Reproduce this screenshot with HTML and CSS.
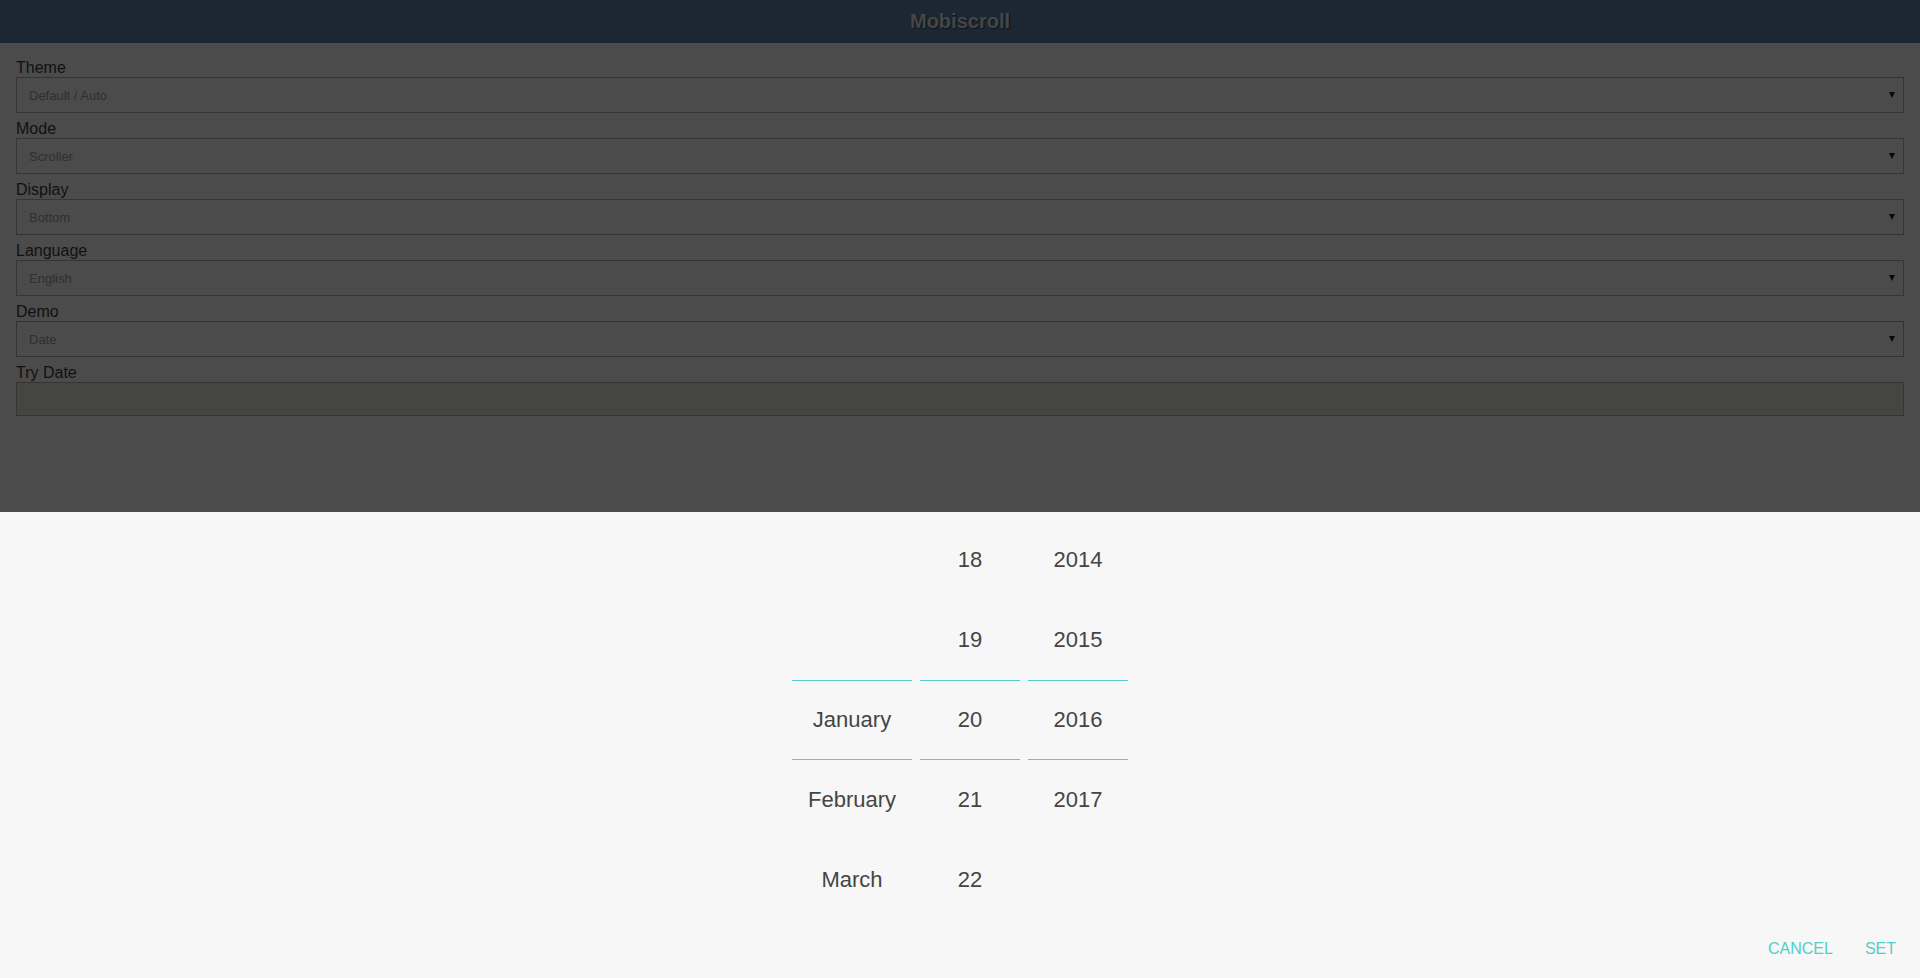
FILE: index.html
```html
<!DOCTYPE html>
<html>
<head>
<meta charset="utf-8">
<title>Mobiscroll</title>
<link rel="stylesheet" href="styles.css">
</head>
<body>
<div class="page">
  <header class="topbar"><h1 class="title">Mobiscroll</h1></header>
  <main class="form">
    <label class="lbl">Theme</label>
    <div class="sel"><span class="val">Default / Auto</span><span class="arrow"></span></div>
    <label class="lbl">Mode</label>
    <div class="sel"><span class="val">Scroller</span><span class="arrow"></span></div>
    <label class="lbl">Display</label>
    <div class="sel"><span class="val">Bottom</span><span class="arrow"></span></div>
    <label class="lbl">Language</label>
    <div class="sel"><span class="val">English</span><span class="arrow"></span></div>
    <label class="lbl">Demo</label>
    <div class="sel"><span class="val">Date</span><span class="arrow"></span></div>
    <label class="lbl">Try Date</label>
    <div class="inp"></div>
  </main>
  <section class="picker">
    <div class="wheels">
      <div class="wheel month">
        <div class="item"></div>
        <div class="item"></div>
        <div class="item sel-item">January</div>
        <div class="item">February</div>
        <div class="item">March</div>
      </div>
      <div class="wheel day">
        <div class="item">18</div>
        <div class="item">19</div>
        <div class="item sel-item">20</div>
        <div class="item">21</div>
        <div class="item">22</div>
      </div>
      <div class="wheel year">
        <div class="item">2014</div>
        <div class="item">2015</div>
        <div class="item sel-item">2016</div>
        <div class="item">2017</div>
        <div class="item"></div>
      </div>
    </div>
    <div class="buttons">
      <span class="btn">CANCEL</span>
      <span class="btn">SET</span>
    </div>
  </section>
</div>
</body>
</html>
```

FILE: styles.css
```css
* { box-sizing: border-box; }
html, body { margin: 0; padding: 0; }
body {
  width: 1920px;
  height: 978px;
  overflow: hidden;
  font-family: "Liberation Sans", Arial, sans-serif;
  background: #4b4b4b;
}
.page {
  display: flex;
  flex-direction: column;
  height: 978px;
}
.topbar {
  height: 43px;
  background: #1b2733;
  display: flex;
  align-items: center;
  justify-content: center;
}
.title {
  margin: 0;
  font-size: 20px;
  font-weight: bold;
  color: #464646;
  text-shadow: 1px 1px 1px #0e141a;
}
.form {
  flex: 1;
  display: flex;
  flex-direction: column;
  padding: 9px 16px 0 16px;
  background: #4b4b4b;
}
.lbl {
  display: block;
  margin-top: 7px;
  height: 18px;
  line-height: 18px;
  font-size: 16px;
  color: #111111;
}
.sel {
  height: 36px;
  border: 1px solid #353535;
  display: flex;
  align-items: center;
  justify-content: space-between;
  padding: 0 8px 0 12px;
}
.val {
  font-size: 13px;
  color: #2f2f2f;
}
.arrow {
  width: 0;
  height: 0;
  border-left: 3px solid transparent;
  border-right: 3px solid transparent;
  border-top: 6px solid #0a0a0a;
}
.inp {
  height: 34px;
  border: 1px solid #353535;
  background: #454543;
}
.picker {
  height: 466px;
  background: #f7f7f7;
  display: flex;
  flex-direction: column;
  padding-top: 8px;
}
.wheels {
  display: flex;
  justify-content: center;
  gap: 8px;
  height: 400px;
}
.wheel { display: flex; flex-direction: column; }
.month { width: 120px; }
.day, .year { width: 100px; }
.item {
  height: 80px;
  display: flex;
  align-items: center;
  justify-content: center;
  font-size: 22px;
  color: #454545;
}
.sel-item {
  border-top: 1px solid #4fcfc8;
  border-bottom: 1px solid #4fcfc8;
}
.buttons {
  flex: 1;
  display: flex;
  justify-content: flex-end;
  align-items: center;
  gap: 32px;
  padding-right: 24px;
}
.btn {
  font-size: 16px;
  color: #4fcfc8;
}
```
